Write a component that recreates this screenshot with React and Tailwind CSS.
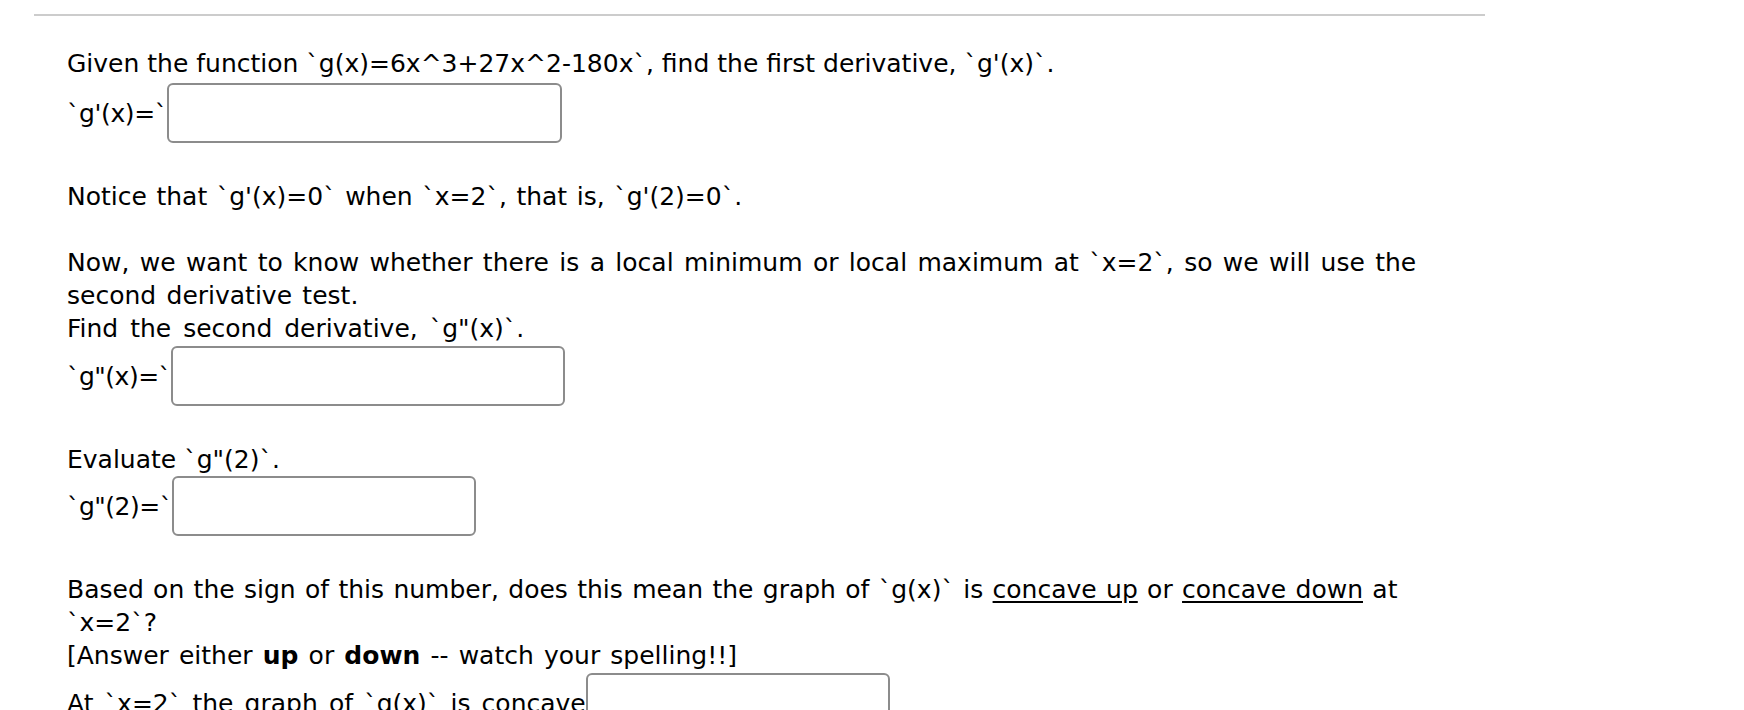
const AnswerRow = ({ label, boxClass, className = '' }) => (
    <div className={`flex items-center ${className}`}>
        <span className="whitespace-pre">{label}</span>
        <input
            type="text"
            className={`h-[60px] rounded-[6px] border-2 border-[#8c8c8c] bg-white outline-none ${boxClass}`}
        />
    </div>
);

export default function App() {
    return (
        <div
            className="min-h-screen bg-white text-black"
            style={{ fontFamily: '"DejaVu Sans", "Open Sans", sans-serif' }}
        >
            <div className="ml-[34px] mt-[14px] w-[1451px] border-t-2 border-[#cccccc]">
                <div className="pl-[33px] pt-[31px] text-[25px] leading-[33px]">
                    <p>Given the function `g(x)=6x^3+27x^2-180x`, find the first derivative, `g'(x)`.</p>
                    <AnswerRow label={<span className="tracking-[-0.4px]">`g'(x)=`</span>} boxClass="w-[395px]" className="mt-[3px]" />

                    <p className="mt-[37px] [word-spacing:1.6px]">Notice that `g'(x)=0` when `x=2`, that is, `g'(2)=0`.</p>

                    <p className="mt-[33px] [word-spacing:2.4px]">
                        Now, we want to know whether there is a local minimum or local maximum at `x=2`, so we will use the
                        <br />
                        second derivative test.
                        <br />
                        <span className="[word-spacing:4px]">Find the second derivative, `g"(x)`.</span>
                    </p>
                    <AnswerRow label={<span className="tracking-[-0.5px]">`g"(x)=`</span>} boxClass="w-[394px]" className="mt-[1px]" />

                    <p className="mt-[37px]">Evaluate `g"(2)`.</p>
                    <AnswerRow label={<span className="tracking-[-0.5px]">`g"(2)=`</span>} boxClass="w-[304px]" />

                    <p className="mt-[37px] [word-spacing:1.4px]">
                        Based on the sign of this number, does this mean the graph of `g(x)` is{' '}
                        <span className="underline underline-offset-[3px]">concave up</span> or{' '}
                        <span className="underline underline-offset-[3px]">concave down</span> at
                        <br />
                        `x=2`?
                        <br />
                        <span className="[word-spacing:2.2px]">
                            [Answer either <b>up</b> or <b>down</b> -- watch your spelling!!]
                        </span>
                    </p>
                    <AnswerRow
                        label={<span className="[word-spacing:3.2px]">At `x=2` the graph of `g(x)` is concave</span>}
                        boxClass="w-[304px]"
                        className="mt-[1px]"
                    />
                </div>
            </div>
        </div>
    );
}
